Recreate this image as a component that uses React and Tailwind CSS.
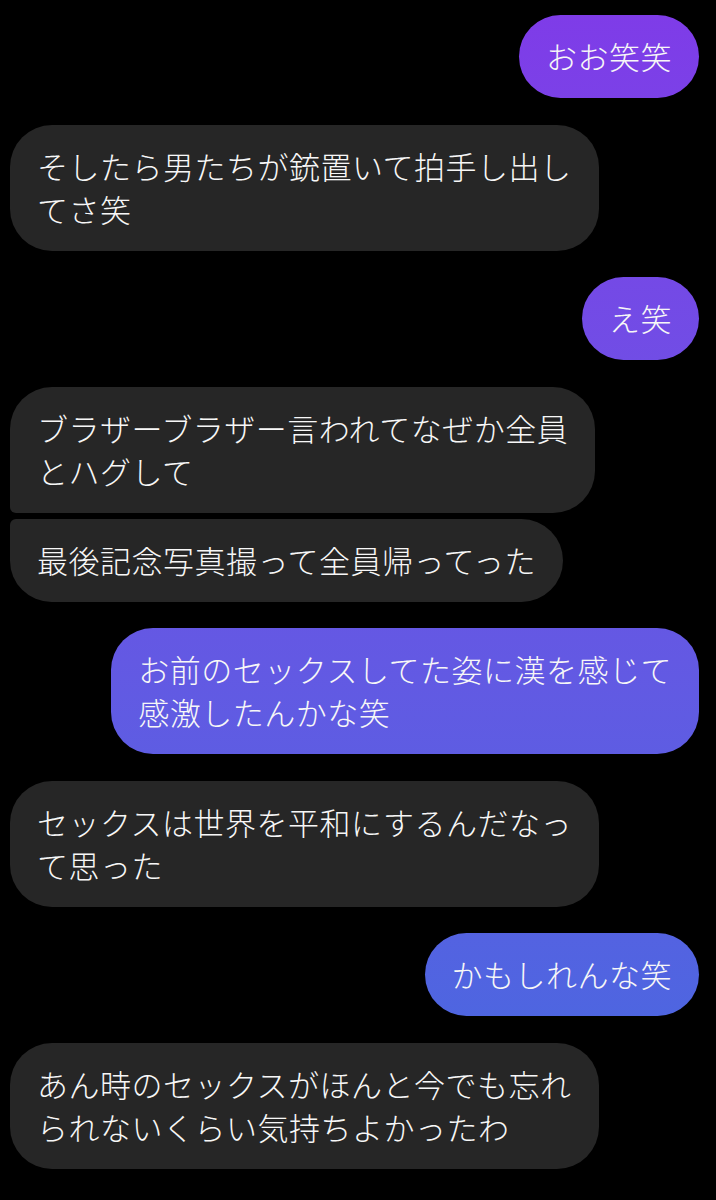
const messages = [
  { me: true, lines: ["おお笑笑"] },
  { me: false, lines: ["そしたら男たちが銃置いて拍手し出し", "てさ笑"] },
  { me: true, lines: ["え笑"] },
  { me: false, lines: ["ブラザーブラザー言われてなぜか全員", "とハグして"], group: "top" },
  { me: false, lines: ["最後記念写真撮って全員帰ってった"], group: "bottom" },
  { me: true, lines: ["お前のセックスしてた姿に漢を感じて", "感激したんかな笑"] },
  { me: false, lines: ["セックスは世界を平和にするんだなっ", "て思った"] },
  { me: true, lines: ["かもしれんな笑"] },
  { me: false, lines: ["あん時のセックスがほんと今でも忘れ", "られないくらい気持ちよかったわ"] },
];

const Bubble = ({ me, lines, group }) => {
  let shape = "rounded-[42px]";
  if (group === "top") shape = "rounded-[42px] rounded-bl-[6px]";
  if (group === "bottom") shape = "rounded-[42px] rounded-tl-[6px]";

  return (
    <div className={`flex ${me ? "justify-end" : "justify-start"} ${group === "bottom" ? "-mt-[20.5px]" : ""}`}>
      <div
        className={`w-fit px-[27px] pt-[19px] pb-[21px] text-[31px] font-light leading-[43px] tracking-[0.5px] text-[#f7f7f7] ${shape} ${
          me
            ? "bg-fixed bg-linear-to-b from-[#7f3be8] to-[#406bdf]"
            : "bg-[#262626]"
        }`}
      >
        {lines.map((line, i) => (
          <div key={i} className="whitespace-nowrap">
            {line}
          </div>
        ))}
      </div>
    </div>
  );
};

export default function App() {
  return (
    <div
      className="w-[716px] h-[1200px] overflow-hidden bg-black pt-[15px] pl-[10px] pr-[17px] flex flex-col gap-[26.5px]"
      style={{ fontFamily: '"Noto Sans CJK JP", "Noto Sans", sans-serif' }}
    >
      {messages.map((m, i) => (
        <Bubble key={i} {...m} />
      ))}
    </div>
  );
}
